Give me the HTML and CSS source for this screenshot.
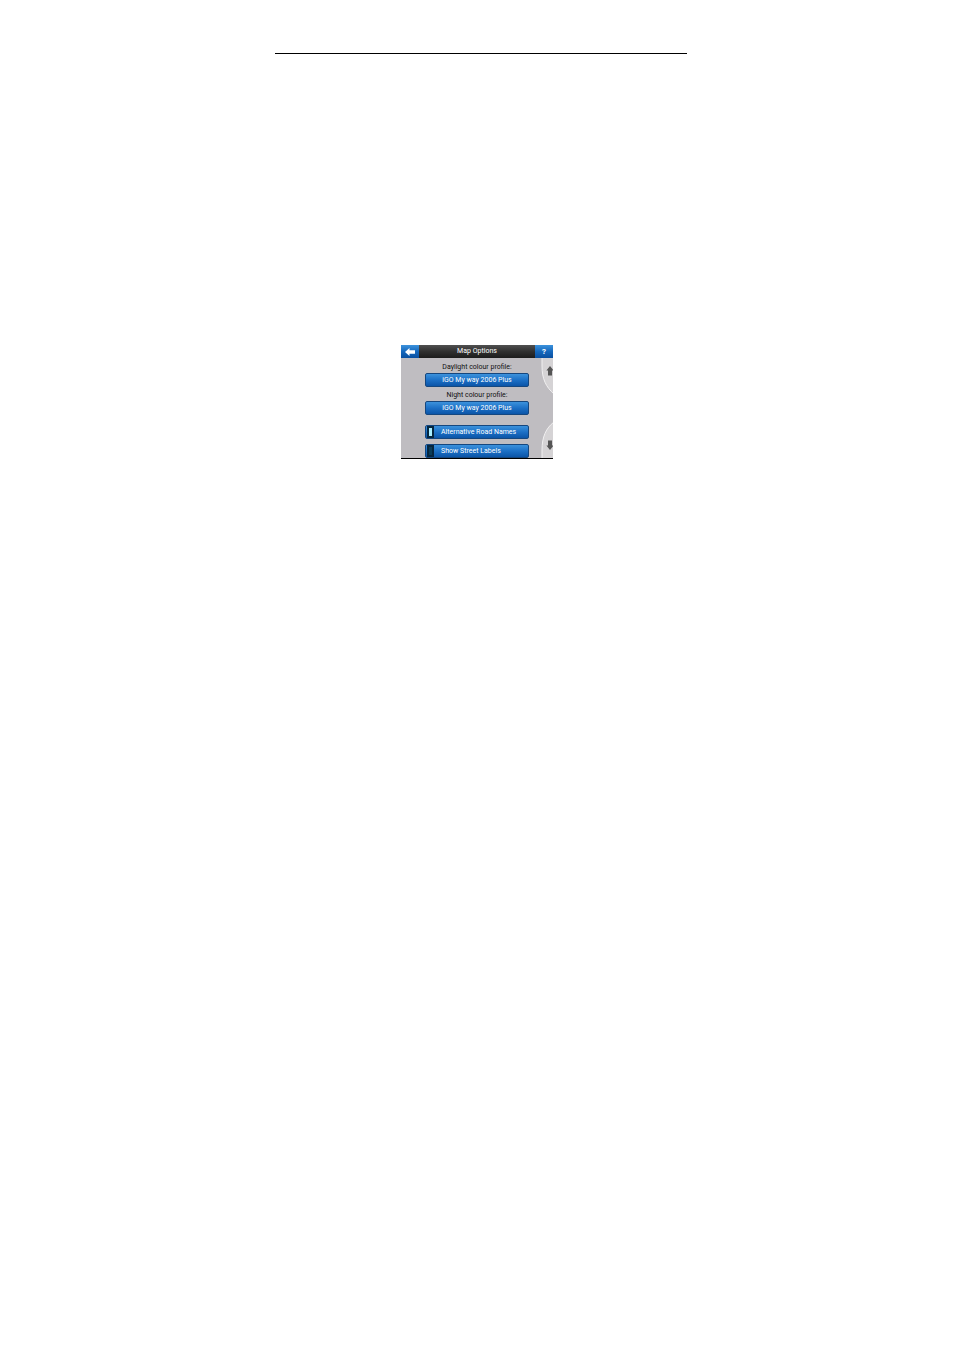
FILE: index.html
```html
<!DOCTYPE html>
<html lang="en">
<head>
  <meta charset="UTF-8" />
  <title>Map Options</title>
  <link rel="stylesheet" href="styles.css">
</head>
<body>

  <hr class="page-rule">

  <div class="device">
    <div class="topbar">
      <button type="button" class="nav-btn" aria-label="Back">
        <svg width="10" height="8" viewBox="0 0 10 8"><path d="M0 4 L4.5 0 V2.2 H10 V5.8 H4.5 V8 Z" fill="#fff"/></svg>
      </button>
      <h1>Map Options</h1>
      <button type="button" class="nav-btn" aria-label="Help">?</button>
    </div>

    <div class="options">
      <div class="profile">
        <label for="dayProfile">Daylight colour profile:</label>
        <button type="button" id="dayProfile" class="option-btn">iGO My way 2006 Plus</button>
      </div>
      <div class="profile">
        <label for="nightProfile">Night colour profile:</label>
        <button type="button" id="nightProfile" class="option-btn">iGO My way 2006 Plus</button>
      </div>
      <div class="toggles">
        <label class="option-btn toggle"><input type="checkbox" checked>Alternative Road Names</label>
        <label class="option-btn toggle"><input type="checkbox">Show Street Labels</label>
      </div>

      <button type="button" class="scroll scroll-up" aria-label="Scroll up">
        <svg width="12" height="38" viewBox="0 0 12 38">
          <path d="M1 -1 V8 C1 21 5 29 13 36 V-1 Z" fill="#d5d3d5" stroke="#f1f0f1" stroke-width="1"/>
          <path d="M9 8 L12.6 12.5 H11 V17.5 H7 V12.5 H5.4 Z" fill="#555"/>
        </svg>
      </button>
      <button type="button" class="scroll scroll-down" aria-label="Scroll down">
        <svg width="12" height="38" viewBox="0 0 12 38">
          <path d="M1 39 V30 C1 17 5 8 13 2 V39 Z" fill="#d5d3d5" stroke="#f1f0f1" stroke-width="1"/>
          <path d="M9 30 L12.6 25.5 H11 V20.5 H7 V25.5 H5.4 Z" fill="#555"/>
        </svg>
      </button>
    </div>
  </div>

</body>
</html>
```
FILE: styles.css
```css
body {
  margin: 0;
  padding-top: 53px;
  background: #fff;
  font-family: Roboto, sans-serif;
  font-size: 7px;
}
.page-rule {
  height: 1px;
  margin: 0 28% 0 275px;
  border: none;
  background: #000;
}
button {
  padding: 0;
  border: none;
  font: inherit;
  cursor: pointer;
}
svg {
  display: block;
}

.device {
  width: 152px;
  margin: 291px auto 0;
  border-bottom: 1px solid #000;
}
.topbar {
  display: flex;
  height: 13px;
  color: #fff;
  background: linear-gradient(#505050, #303030 50%, #1c1c1c);
}
.topbar h1 {
  flex: 1;
  margin: 0;
  font-size: 7px;
  font-weight: normal;
  line-height: 13px;
  text-align: center;
}
.nav-btn {
  display: flex;
  align-items: center;
  justify-content: center;
  width: 18px;
  color: #fff;
  font-size: 8px;
  font-weight: bold;
  background: linear-gradient(#3c92dc, #1568bd 50%, #0a4f9f);
}

.options {
  position: relative;
  padding: 4px 24px 0;
  background: #bfbdc1;
}
.profile {
  margin-bottom: 3px;
  text-align: center;
}
.profile label {
  display: block;
  color: #111;
  line-height: 11px;
}
.option-btn {
  display: block;
  box-sizing: border-box;
  width: 100%;
  height: 14px;
  border: 1px solid #15477f;
  border-radius: 2px;
  color: #fff;
  line-height: 12px;
  background: linear-gradient(#3c92dc, #1c70c6 50%, #0b55a8);
}
.toggles {
  display: grid;
  gap: 5px;
  padding-top: 7px;
}
.toggle {
  display: flex;
  align-items: center;
  gap: 7px;
  cursor: pointer;
}
/* small indicator lamp */
.toggle input {
  appearance: none;
  width: 7px;
  height: 12px;
  margin: 0 0 0 1px;
  border: 2px solid #06263f;
  background: #0b3d58;
}
.toggle input:checked {
  background: #a9efff;
}

.scroll {
  position: absolute;
  right: 0;
  background: none;
}
.scroll-up {
  top: 0;
}
.scroll-down {
  bottom: 0;
}
```
